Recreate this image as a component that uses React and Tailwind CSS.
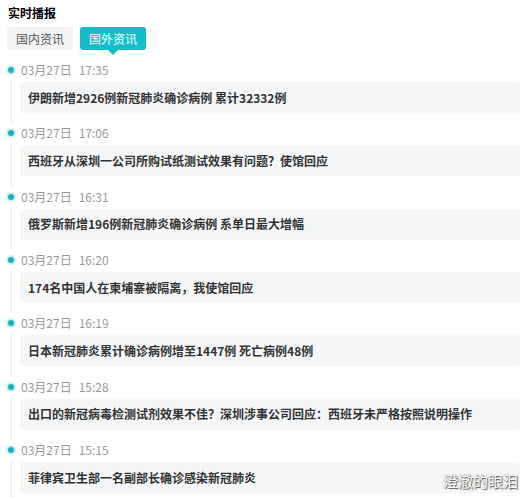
import React from "react";

const items = [
  ["17:35", "伊朗新增2926例新冠肺炎确诊病例 累计32332例"],
  ["17:06", "西班牙从深圳一公司所购试纸测试效果有问题？使馆回应"],
  ["16:31", "俄罗斯新增196例新冠肺炎确诊病例 系单日最大增幅"],
  ["16:20", "174名中国人在柬埔寨被隔离，我使馆回应"],
  ["16:19", "日本新冠肺炎累计确诊病例增至1447例 死亡病例48例"],
  ["15:28", "出口的新冠病毒检测试剂效果不佳？深圳涉事公司回应：西班牙未严格按照说明操作"],
  ["15:15", "菲律宾卫生部一名副部长确诊感染新冠肺炎"],
];

export default function App() {
  return (
    <div
      className="relative w-[526px] h-[498px] overflow-hidden bg-white pr-[6px]"
      style={{ fontFamily: '"Noto Sans CJK SC", "Noto Sans", sans-serif' }}
    >
      <div className="pl-[8px] pt-[6px] text-[12px] leading-[14px] font-bold text-black">实时播报</div>
      <div className="mt-[7px] flex gap-[7px] pl-[7px]">
        <div className="h-[23px] w-[66px] rounded-[3px] bg-[#f3f4f5] text-[#555] text-[12px] flex items-center justify-center">
          国内资讯
        </div>
        <div className="relative h-[23px] w-[66px] rounded-[3px] bg-[#14bec9] text-white text-[12px] flex items-center justify-center">
          国外资讯
          <div className="absolute left-1/2 -translate-x-1/2 top-full w-0 h-0 border-l-[5px] border-r-[5px] border-t-[5px] border-l-transparent border-r-transparent border-t-[#14bec9]" />
        </div>
      </div>
      <div className="mt-[10px] flex flex-col">
        {items.map(([t, text], i) => (
          <div key={i} className="flex">
            <div className="w-5 flex flex-col shrink-0">
              <div className="h-5 flex items-center">
                <div className="ml-[6px] w-[10px] h-[10px] rounded-full bg-[#cdeff2] flex items-center justify-center">
                  <div className="w-[6px] h-[6px] rounded-full bg-[#14b5c2]" />
                </div>
              </div>
              <div className="ml-[11px] w-px flex-1 bg-[#ebebeb]" />
            </div>
            <div className="flex-1 pb-[10.35px]">
              <div className="h-5 flex items-center pl-px text-[12px] text-[#999]">
                <span>03月27日</span>
                <span className="ml-[7px]">{t}</span>
              </div>
              <div className="mt-[2px] h-[31px] rounded-[3px] bg-[#f5f6f7] flex items-center pl-[8px] text-[12px] font-bold text-[#333] whitespace-nowrap">
                {text}
              </div>
            </div>
          </div>
        ))}
      </div>
      <div
        className="absolute right-[8px] bottom-[7px] text-[15px] leading-[20px] text-white"
        style={{ textShadow: "0 0 1px #666, 1px 1px 1px #555" }}
      >
        澄澈的眼泪
      </div>
    </div>
  );
}
